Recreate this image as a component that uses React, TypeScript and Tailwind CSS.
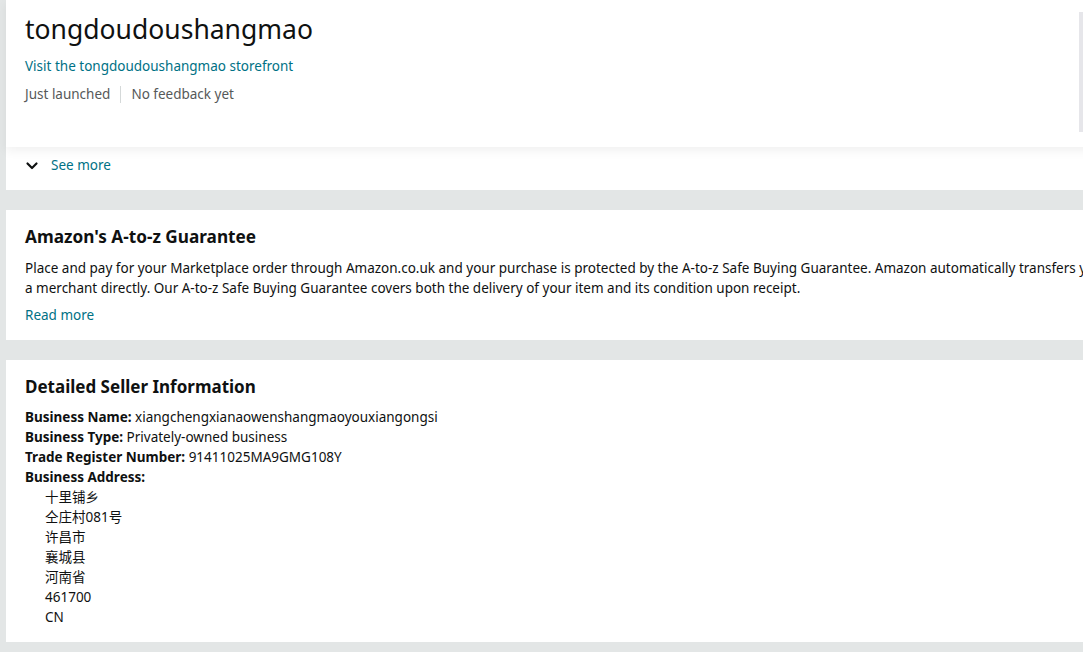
import React from "react";

const font = { fontFamily: '"Noto Sans", "Noto Sans CJK SC", sans-serif' };

function Card({ children, className = "" }: { children: React.ReactNode; className?: string }) {
  return <div className={`bg-white ${className}`}>{children}</div>;
}

export default function App() {
  return (
    <div className="relative w-[1083px] h-[652px] overflow-hidden bg-[#e3e6e6] text-[#0f1111]" style={font}>
      <div className="w-[1500px] pl-[6px] flex flex-col gap-[20px]">
        {/* SELLER HEADER */}
        <Card>
          <div className="relative h-[147px] px-[19px] pt-[11px] shadow-[0_4px_10px_rgba(0,0,0,0.06)] z-10 bg-white">
            <h1 className="text-[26.5px] leading-[36px] font-normal">tongdoudoushangmao</h1>
            <a className="block mt-[9px] text-[13.5px] leading-[20px] text-[#007185]">
              Visit the tongdoudoushangmao storefront
            </a>
            <div className="mt-[8px] flex items-center text-[13.5px] leading-[20px] text-[#565959]">
              <span>Just launched</span>
              <span className="mx-[10px] h-[17px] w-px bg-[#d5d9d9]" />
              <span>No feedback yet</span>
            </div>
          </div>
          <div className="h-[43px] px-[19px] pb-[6px] flex items-center gap-[12px] text-[13.5px] text-[#007185]">
            <svg width="14" height="14" viewBox="0 0 14 14" className="text-[#0f1111]">
              <path d="M2.5 4.5 L7 9 L11.5 4.5" fill="none" stroke="currentColor" strokeWidth="2.2" strokeLinecap="round" strokeLinejoin="round" />
            </svg>
            <span>See more</span>
          </div>
        </Card>

        {/* A-TO-Z */}
        <Card className="h-[130px] px-[19px] pt-[15px]">
          <h2 className="text-[17.2px] leading-[24px] font-bold">Amazon's A-to-z Guarantee</h2>
          <p className="mt-[9px] text-[13.5px] leading-[20px]">
            Place and pay for your Marketplace order through Amazon.co.uk and your purchase is protected by the A-to-z Safe Buying Guarantee. Amazon automatically transfers your payment to the seller after dispatch. Never pay
            <br />
            a merchant directly. Our A-to-z Safe Buying Guarantee covers both the delivery of your item and its condition upon receipt.
          </p>
          <a className="block mt-[7px] text-[13.5px] leading-[20px] text-[#007185]">Read more</a>
        </Card>

        {/* DETAILED SELLER INFO */}
        <Card className="h-[282px] px-[19px] pt-[15px]">
          <h2 className="text-[17px] leading-[24px] font-bold">Detailed Seller Information</h2>
          <div className="mt-[8px] text-[13.5px] leading-[20px]">
            <div><span className="font-bold">Business Name:</span> xiangchengxianaowenshangmaoyouxiangongsi</div>
            <div><span className="font-bold">Business Type:</span> Privately-owned business</div>
            <div><span className="font-bold">Trade Register Number:</span> 91411025MA9GMG108Y</div>
            <div className="font-bold">Business Address:</div>
            <div className="pl-[20px]">
              {["十里铺乡", "仝庄村081号", "许昌市", "襄城县", "河南省", "461700", "CN"].map((l) => (
                <div key={l}>{l}</div>
              ))}
            </div>
          </div>
        </Card>
      </div>

      {/* scroll strip */}
      <div className="absolute right-0 top-[12px] w-[4px] h-[120px] bg-[#e6e6ea] z-20" />
    </div>
  );
}
